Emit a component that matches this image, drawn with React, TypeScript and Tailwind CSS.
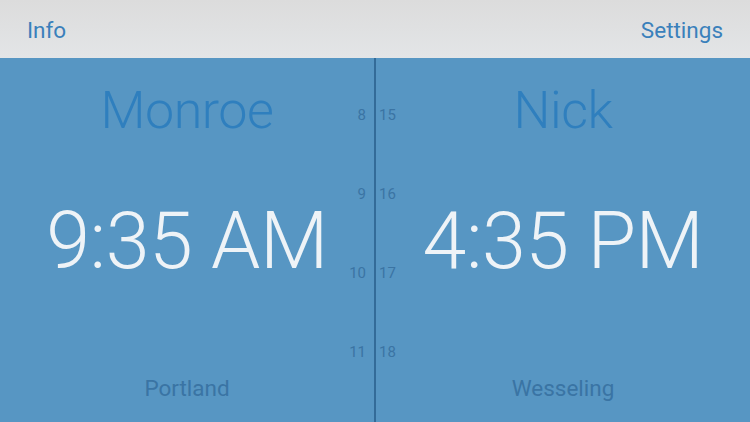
import React from 'react';

interface PanelProps {
    name: string;
    time: string;
    place: string;
}

const Panel: React.FC<PanelProps> = ({ name, time, place }) => (
    <div className="flex-1 flex flex-col items-center">
        <div className="h-[106px] flex items-center justify-center text-[52px] font-light text-[#2f7fbe] leading-none tracking-[-0.5px]">
            {name}
        </div>
        <div className="h-[154px] flex items-center justify-center text-[79px] font-light text-[#eef3f7] leading-none tracking-[-0.5px]">
            {time}
        </div>
        <div className="flex-1 flex items-center justify-center pt-[36px] text-[22.5px] text-[#3a74a4] leading-none">
            {place}
        </div>
    </div>
);

const hours: [number, number][] = [
    [8, 15],
    [9, 16],
    [10, 17],
    [11, 18],
];

const App: React.FC = () => {
    return (
        <div className="w-[750px] h-[422px] overflow-hidden flex flex-col font-['Roboto','Liberation_Sans',sans-serif]">
            <header className="h-[58px] shrink-0 flex items-center justify-between px-[27px] pt-[3px] bg-gradient-to-b from-[#dcdcdc] to-[#e3e5e7] text-[22.5px] text-[#3a80bb]">
                <span>Info</span>
                <span>Settings</span>
            </header>

            <main className="flex-1 flex bg-[#5796c3]">
                <Panel name="Monroe" time="9:35 AM" place="Portland" />

                {/* timeline divider with hour ticks */}
                <div className="relative w-[2px] bg-[#336b98]">
                    {hours.map(([a, b], i) => (
                        <React.Fragment key={i}>
                            <span
                                className="absolute right-[10px] text-[15px] text-[#3b74a3] leading-none"
                                style={{ top: 50 + i * 79 }}
                            >
                                {a}
                            </span>
                            <span
                                className="absolute left-[5px] text-[15px] text-[#3b74a3] leading-none"
                                style={{ top: 50 + i * 79 }}
                            >
                                {b}
                            </span>
                        </React.Fragment>
                    ))}
                </div>

                <Panel name="Nick" time="4:35 PM" place="Wesseling" />
            </main>
        </div>
    );
};

export default App;
